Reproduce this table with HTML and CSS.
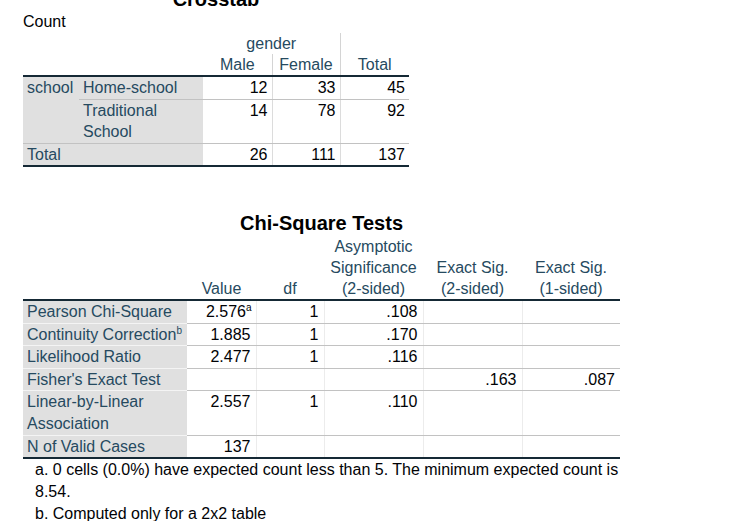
FILE: index.html
```html
<!DOCTYPE html>
<html>
<head>
<meta charset="utf-8">
<link rel="stylesheet" href="styles.css">
</head>
<body>
<div class="page">
  <div class="title title-crosstab">Crosstab</div>
  <div class="count">Count</div>
  <table class="grid crosstab">
    <colgroup>
      <col class="c-var"><col class="c-cat"><col class="c-n1"><col class="c-n2"><col class="c-n1">
    </colgroup>
    <thead>
      <tr class="hrow">
        <th colspan="2" class="corner"></th>
        <th colspan="2" class="hd">gender</th>
        <th rowspan="2" class="hd vl-h thick">Total</th>
      </tr>
      <tr class="hrow">
        <th colspan="2" class="corner thick"></th>
        <th class="hd thick">Male</th>
        <th class="hd vl-h thick">Female</th>
      </tr>
    </thead>
    <tbody>
      <tr class="brow">
        <td rowspan="2" class="lab sep">school</td>
        <td class="lab sep">Home-school</td>
        <td class="num sep">12</td>
        <td class="num sep vl">33</td>
        <td class="num sep vl">45</td>
      </tr>
      <tr class="brow">
        <td class="lab sep">Traditional<br>School</td>
        <td class="num sep">14</td>
        <td class="num sep vl">78</td>
        <td class="num sep vl">92</td>
      </tr>
      <tr class="brow">
        <td colspan="2" class="lab thick">Total</td>
        <td class="num thick">26</td>
        <td class="num thick vl">111</td>
        <td class="num thick vl">137</td>
      </tr>
    </tbody>
  </table>

  <div class="title title-chi">Chi-Square Tests</div>
  <table class="grid chi">
    <colgroup>
      <col class="k-lab"><col class="k-val"><col class="k-df"><col class="k-sig"><col class="k-sig"><col class="k-sig1">
    </colgroup>
    <thead>
      <tr class="chead">
        <th class="corner thick"></th>
        <th class="hd thick">Value</th>
        <th class="hd thick">df</th>
        <th class="hd thick">Asymptotic<br>Significance<br>(2-sided)</th>
        <th class="hd thick">Exact Sig.<br>(2-sided)</th>
        <th class="hd thick">Exact Sig.<br>(1-sided)</th>
      </tr>
    </thead>
    <tbody>
      <tr class="crow">
        <td class="lab lsep">Pearson Chi-Square</td>
        <td class="num val sep">2.576<sup class="fn">a</sup></td>
        <td class="num sep vl2">1</td>
        <td class="num sep vl2">.108</td>
        <td class="num sep vl2"></td>
        <td class="num sep vl2"></td>
      </tr>
      <tr class="crow">
        <td class="lab lsep">Continuity Correction<sup class="fn">b</sup></td>
        <td class="num val sep">1.885</td>
        <td class="num sep vl2">1</td>
        <td class="num sep vl2">.170</td>
        <td class="num sep vl2"></td>
        <td class="num sep vl2"></td>
      </tr>
      <tr class="crow">
        <td class="lab lsep">Likelihood Ratio</td>
        <td class="num val sep">2.477</td>
        <td class="num sep vl2">1</td>
        <td class="num sep vl2">.116</td>
        <td class="num sep vl2"></td>
        <td class="num sep vl2"></td>
      </tr>
      <tr class="crow">
        <td class="lab lsep">Fisher's Exact Test</td>
        <td class="num val sep"></td>
        <td class="num sep vl2"></td>
        <td class="num sep vl2"></td>
        <td class="num sep vl2">.163</td>
        <td class="num sep vl2">.087</td>
      </tr>
      <tr class="crow">
        <td class="lab lsep">Linear-by-Linear<br>Association</td>
        <td class="num val sep">2.557</td>
        <td class="num sep vl2">1</td>
        <td class="num sep vl2">.110</td>
        <td class="num sep vl2"></td>
        <td class="num sep vl2"></td>
      </tr>
      <tr class="crow">
        <td class="lab thick">N of Valid Cases</td>
        <td class="num val thick">137</td>
        <td class="num thick vl2"></td>
        <td class="num thick vl2"></td>
        <td class="num thick vl2"></td>
        <td class="num thick vl2"></td>
      </tr>
    </tbody>
  </table>
  <div class="notes">
    <div>a. 0 cells (0.0%) have expected count less than 5. The minimum expected count is 8.54.</div>
    <div>b. Computed only for a 2x2 table</div>
  </div>
</div>
</body>
</html>
```

FILE: styles.css
```css
html, body {
  margin: 0;
  padding: 0;
  background: #ffffff;
}

body {
  font-family: "Liberation Sans", Arial, sans-serif;
  font-size: 16px;
  color: #010205;
}

.page {
  padding-left: 23px;
  width: 597px;
}

.title {
  font-weight: bold;
  color: #000000;
  text-align: center;
}

.title-crosstab {
  width: 386px;
  font-size: 20px;
  line-height: 24px;
  margin-top: -13px;
}

.title-chi {
  width: 597px;
  font-size: 20px;
  line-height: 26px;
  margin-top: 43px;
}

.count {
  line-height: 22px;
  color: #010205;
}

.grid {
  border-collapse: collapse;
  table-layout: fixed;
  border-spacing: 0;
}

.grid th,
.grid td {
  padding: 0;
  font-weight: normal;
}

.crosstab { width: 386px; }
.c-var { width: 56px; }
.c-cat { width: 124px; }
.c-n1 { width: 69px; }
.c-n2 { width: 68px; }

.chi { width: 597px; }
.k-lab { width: 164px; }
.k-val { width: 69px; }
.k-df { width: 68px; }
.k-sig { width: 99px; }
.k-sig1 { width: 98px; }

.hd {
  color: #264a60;
  text-align: center;
  vertical-align: bottom;
}

.hrow .hd,
.hrow .corner {
  line-height: 21px;
}

.chead .hd {
  line-height: 21px;
}

.thick {
  border-bottom: 2px solid #152935;
}

.vl-h {
  border-left: 1px solid #d4d4d4;
}

.lab {
  background: #e0e0e0;
  color: #264a60;
  text-align: left;
  vertical-align: top;
  padding-left: 4px !important;
  white-space: nowrap;
}

.num {
  text-align: right;
  vertical-align: top;
  padding-right: 4px !important;
  color: #010205;
}

.brow td {
  line-height: 21.5px;
}

.crow td {
  line-height: 21.6px;
}

.chi .num {
  padding-right: 5px !important;
}

.sep {
  border-bottom: 1px solid #c2c2c2;
}

.lsep {
  border-bottom: 1px solid #f4f4f4;
}

.vl {
  border-left: 1px solid #dcdcdc;
}

.vl2 {
  border-left: 1px solid #ececec;
}

.fn {
  font-size: 10px;
  line-height: 0;
  vertical-align: 6px;
}

.val .fn {
  margin-right: -1px;
}

.notes {
  width: 585px;
  padding-left: 12px;
  line-height: 22px;
  color: #010205;
}
```
